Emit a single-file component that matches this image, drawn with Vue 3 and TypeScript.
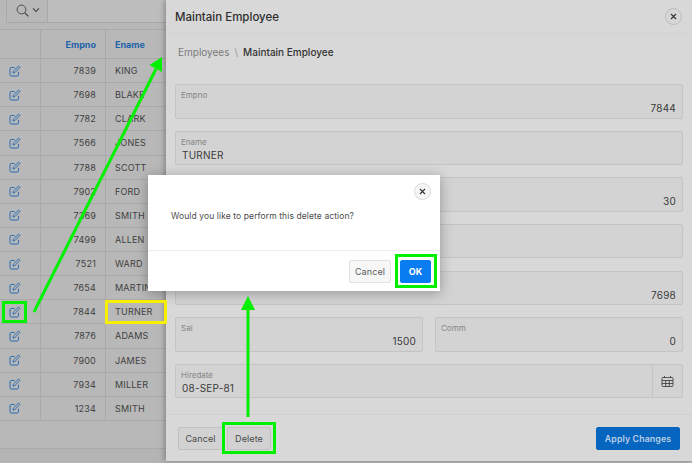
<script setup lang="ts">
const employees = [
  { empno: 7839, ename: 'KING' },
  { empno: 7698, ename: 'BLAKE' },
  { empno: 7782, ename: 'CLARK' },
  { empno: 7566, ename: 'JONES' },
  { empno: 7788, ename: 'SCOTT' },
  { empno: 7902, ename: 'FORD' },
  { empno: 7369, ename: 'SMITH' },
  { empno: 7499, ename: 'ALLEN' },
  { empno: 7521, ename: 'WARD' },
  { empno: 7654, ename: 'MARTIN' },
  { empno: 7844, ename: 'TURNER' },
  { empno: 7876, ename: 'ADAMS' },
  { empno: 7900, ename: 'JAMES' },
  { empno: 7934, ename: 'MILLER' },
  { empno: 1234, ename: 'SMITH' },
]
</script>

<template>
  <div class="page">
    <section class="report">
      <div class="toolbar">
        <button class="search-btn" type="button">
          <svg width="13" height="13" viewBox="0 0 13 13" fill="none" stroke="#4a4a4a" stroke-width="1">
            <circle cx="5.5" cy="5.5" r="4.4" />
            <path d="M8.8 8.8 12.4 12.4" stroke-width="1.3" />
          </svg>
          <svg width="8" height="6" viewBox="0 0 8 6" fill="none" stroke="#4a4a4a" stroke-width="1.2">
            <path d="M1 1.3 4 4.3 7 1.3" />
          </svg>
        </button>
      </div>
      <div class="grid">
        <div class="row row--head">
          <div class="cell cell--icon"></div>
          <div class="cell cell--num">Empno</div>
          <div class="cell cell--name">Ename</div>
        </div>
        <div v-for="emp in employees" :key="emp.empno" class="row">
          <div class="cell cell--icon">
            <svg width="12" height="12" viewBox="0 0 12 12" fill="none" stroke="#2a6db0" stroke-width="1">
              <path d="M9.5 6.8v2.9a1.3 1.3 0 0 1-1.3 1.3H2.3A1.3 1.3 0 0 1 1 9.7V3.8a1.3 1.3 0 0 1 1.3-1.3h3.4" />
              <path d="M4.4 6.2 9.6 1l1.4 1.4-5.2 5.2-1.8.4z" />
            </svg>
          </div>
          <div class="cell cell--num">{{ emp.empno }}</div>
          <div class="cell cell--name">{{ emp.ename }}</div>
        </div>
      </div>
    </section>

    <section class="drawer">
      <header class="drawer-head">
        <h1>Maintain Employee</h1>
        <button class="close close--dim" type="button" aria-label="Close">
          <svg width="7" height="7" viewBox="0 0 7 7" stroke="#333" stroke-width="1.1"><path d="M1 1l5 5M6 1 1 6" /></svg>
        </button>
      </header>
      <div class="crumbs">
        <span class="crumb">Employees</span>
        <span class="crumb-sep">\</span>
        <span class="crumb-current">Maintain Employee</span>
      </div>
      <form class="form">
        <div class="field"><label>Empno</label><div class="value value--num">7844</div></div>
        <div class="field"><label>Ename</label><div class="value">TURNER</div></div>
        <div class="field"><label>Deptno</label><div class="value value--num">30</div></div>
        <div class="field"><label>Job</label><div class="value">SALESMAN</div></div>
        <div class="field"><label>Mgr</label><div class="value value--num">7698</div></div>
        <div class="field-pair">
          <div class="field"><label>Sal</label><div class="value value--num">1500</div></div>
          <div class="field"><label>Comm</label><div class="value value--num">0</div></div>
        </div>
        <div class="field field--date">
          <div class="date-main"><label>Hiredate</label><div class="value">08-SEP-81</div></div>
          <div class="date-btn">
            <svg width="13" height="13" viewBox="0 0 13 13" fill="none" stroke="#444" stroke-width="0.9">
              <rect x="1" y="2.5" width="11" height="9" rx="1" />
              <path d="M1 5.5h11M1 8.5h11M4.7 5.5v6M8.3 5.5v6M3.5 1v1.5M9.5 1v1.5" />
            </svg>
          </div>
        </div>
      </form>
      <footer class="drawer-foot">
        <button class="btn btn--cancel" type="button">Cancel</button>
        <button class="btn btn--delete" type="button">Delete</button>
        <button class="btn btn--apply" type="button">Apply Changes</button>
      </footer>
    </section>

    <div class="dialog" role="dialog">
      <div class="dialog-body">
        <button class="close" type="button" aria-label="Close">
          <svg width="7" height="7" viewBox="0 0 7 7" stroke="#333" stroke-width="1.1"><path d="M1 1l5 5M6 1 1 6" /></svg>
        </button>
        <p>Would you like to perform this delete action?</p>
      </div>
      <div class="dialog-foot">
        <button class="btn btn--light" type="button">Cancel</button>
        <button class="btn btn--ok" type="button">OK</button>
      </div>
    </div>

    <!-- annotations drawn over the screenshot -->
    <div class="mark mark--edit"></div>
    <div class="mark mark--turner"></div>
    <div class="mark mark--delete"></div>
    <div class="mark mark--ok"></div>
    <svg class="arrows" width="692" height="463" viewBox="0 0 692 463">
      <path d="M34 312 156 69" stroke="#00f000" stroke-width="3" fill="none" />
      <path d="M162 57 162 72 149.5 65z" fill="#00f000" />
      <path d="M248 417V308" stroke="#00f000" stroke-width="3" fill="none" />
      <path d="M248 296 255 310H241z" fill="#00f000" />
    </svg>
  </div>
</template>

<style>
html,
body {
  margin: 0;
  background: #8f8f8f;
}
</style>

<style scoped>
.page {
  position: relative;
  width: 692px;
  height: 463px;
  overflow: hidden;
  display: grid;
  grid-template-columns: 166px 526px;
  font-family: Inter, "Liberation Sans", sans-serif;
  color: #3d3d3d;
  background: #b4b4b4;
}

button {
  font-family: inherit;
}

.report {
  height: 448px;
  background: #b8b8b8;
  display: flex;
  flex-direction: column;
  border-bottom: 1px solid #aaa;
}

.toolbar {
  height: 22px;
  margin: 0 0 6px 6px;
  background: #bdbdbd;
  border-bottom: 1px solid #a6a6a6;
  border-left: 1px solid #a8a8a8;
  border-radius: 0 0 0 3px;
}

.search-btn {
  width: 41px;
  height: 22px;
  padding: 0 0 2px 9px;
  display: flex;
  align-items: center;
  gap: 3px;
  background: #b8b8b8;
  border: 0;
  border-right: 1px solid #a8a8a8;
}

.grid {
  border-top: 1px solid #a9a9a9;
}

.row {
  display: grid;
  grid-template-columns: 41px 65px 1fr;
  height: 24.14px;
  border-bottom: 1px solid #a9a9a9;
  box-sizing: border-box;
  font-size: 9px;
  letter-spacing: 0.2px;
  color: #3f3f3f;
}

.row--head {
  height: 29px;
  font-weight: 700;
  color: #1f63a8;
  font-size: 9px;
  letter-spacing: 0;
}

.cell {
  display: flex;
  align-items: center;
  min-width: 0;
  white-space: nowrap;
  overflow: hidden;
  border-right: 1px solid #a9a9a9;
  box-sizing: border-box;
}

.cell--name {
  padding-left: 9px;
  border-right: 0;
}

.cell--num {
  justify-content: flex-end;
  padding-right: 9px;
}

.cell--icon {
  justify-content: flex-start;
  padding-left: 9px;
}

.drawer {
  position: relative;
  height: 461px;
  background: #d8d8d8;
  display: flex;
  flex-direction: column;
  box-shadow: -2px 0 5px rgba(0, 0, 0, 0.25);
}

.drawer-head {
  height: 33px;
  padding: 0 10px 0 9px;
  display: flex;
  align-items: center;
  justify-content: space-between;
  border-bottom: 1px solid #d2d2d2;
}

.drawer-head h1 {
  margin: 0;
  font-size: 11.5px;
  font-weight: 500;
  color: #2e2e2e;
}

.close {
  width: 17px;
  height: 17px;
  padding: 0;
  display: flex;
  align-items: center;
  justify-content: center;
  border: 1px solid #d9d9d9;
  border-radius: 50%;
  background: #f6f6f6;
}

.close--dim {
  background: #d6d6d6;
  border-color: #bcbcbc;
}

.crumbs {
  height: 50px;
  padding: 12px 0 0 12px;
  box-sizing: border-box;
  display: flex;
  align-items: flex-start;
  gap: 5px;
  font-size: 10px;
  color: #7b7b7b;
}

.crumb-sep {
  color: #9a9a9a;
}

.crumb-current {
  color: #333;
  font-weight: 500;
}

.form {
  padding: 0 9px;
  display: flex;
  flex-direction: column;
  gap: 12.17px;
}

.field {
  position: relative;
  height: 34.5px;
  box-sizing: border-box;
  padding: 5px 6px 0;
  background: #d3d3d3;
  border: 1px solid #c4c4c4;
  border-radius: 2px;
  display: flex;
  flex-direction: column;
}

.field label {
  font-size: 8px;
  line-height: 10px;
  color: #858585;
  margin-left: -1px;
}

.value {
  font-size: 10px;
  line-height: 14px;
  margin-top: 1px;
  color: #3a3a3a;
  letter-spacing: 0.2px;
}

.value--num {
  text-align: right;
}

.field-pair {
  display: grid;
  grid-template-columns: 1fr 1fr;
  gap: 12px;
}

.field--date {
  flex-direction: row;
  padding: 0;
}

.date-main {
  flex: 1;
  padding: 5px 6px 0;
  display: flex;
  flex-direction: column;
}

.date-btn {
  width: 29px;
  display: flex;
  align-items: center;
  justify-content: center;
  border-left: 1px solid #c4c4c4;
}

.drawer-foot {
  margin-top: 16px;
  padding: 11.5px 12px 0;
  border-top: 1px solid #d0d0d0;
  display: flex;
  gap: 4px;
}

.btn {
  height: 23px;
  padding: 0;
  font-size: 9px;
  letter-spacing: 0.1px;
  color: #4a4a4a;
  background: #d2d2d2;
  border: 1px solid #c0c0c0;
  border-radius: 2px;
}

.btn--cancel {
  width: 45px;
}

.btn--delete {
  width: 44px;
}

.btn--apply {
  margin-left: auto;
  width: 84px;
  font-size: 8.8px;
  color: #b9cfe6;
  font-weight: 600;
  background: #0565bf;
  border-color: #0565bf;
}

.dialog {
  position: absolute;
  left: 148px;
  top: 175px;
  width: 292px;
  height: 116px;
  display: flex;
  flex-direction: column;
  background: #fff;
  box-shadow: 0 2px 12px rgba(0, 0, 0, 0.3);
}

.dialog-body {
  position: relative;
  height: 75px;
  border-bottom: 1px solid #ececec;
}

.dialog-body .close {
  position: absolute;
  top: 8px;
  right: 9px;
}

.dialog-body p {
  margin: 0;
  padding: 35px 0 0 23px;
  font-size: 8.5px;
  letter-spacing: 0.1px;
  line-height: 12px;
  color: #4b4b4b;
}

.dialog-foot {
  flex: 1;
  display: flex;
  justify-content: flex-end;
  padding: 9px 9px 0 0;
  gap: 9px;
}

.btn--light {
  width: 42px;
  background: #f7f7f7;
  border-color: #e2e2e2;
  color: #5a5a5a;
}

.btn--ok {
  width: 31px;
  background: #0a7cf2;
  border-color: #0a7cf2;
  color: #fff;
  font-weight: 700;
}

.mark {
  position: absolute;
  box-sizing: border-box;
  border: 3px solid #00f000;
}

.mark--edit {
  left: 2px;
  top: 301px;
  width: 25px;
  height: 22px;
}

.mark--turner {
  left: 105px;
  top: 300px;
  width: 62px;
  height: 24px;
  border-color: #f5f000;
}

.mark--delete {
  left: 222px;
  top: 422px;
  width: 54px;
  height: 32px;
}

.mark--ok {
  left: 395px;
  top: 254px;
  width: 42px;
  height: 34px;
}

.arrows {
  position: absolute;
  left: 0;
  top: 0;
  pointer-events: none;
}
</style>
